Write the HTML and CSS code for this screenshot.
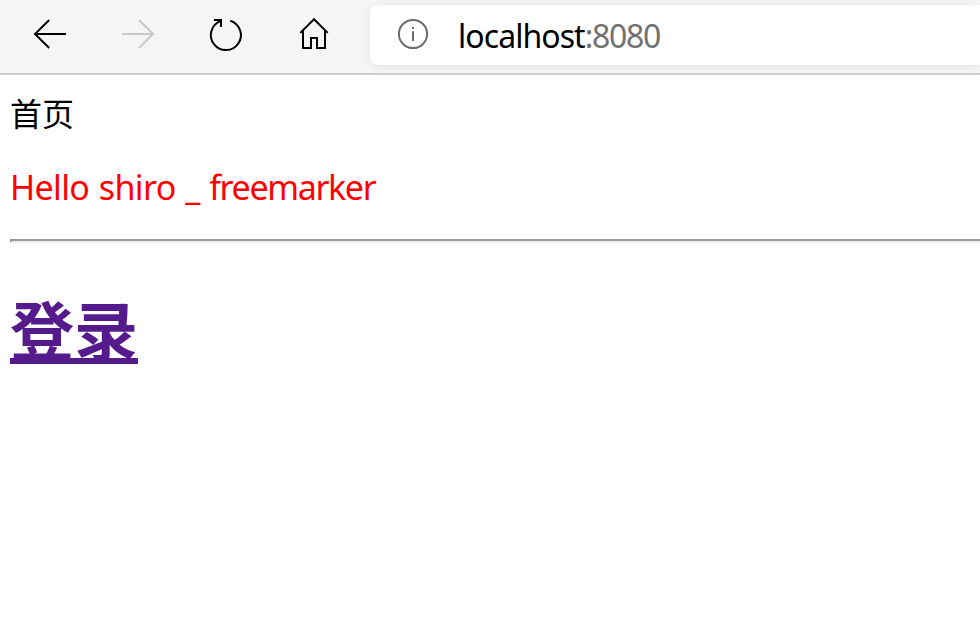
FILE: index.html
```html
<!DOCTYPE html>
<html lang="zh-CN">
<head>
<meta charset="utf-8">
<title>首页</title>
<link rel="stylesheet" href="styles.css">
</head>
<body>
<header class="toolbar">
  <nav class="buttons">
    <svg class="icon" viewBox="0 0 40 40"><path d="M36 20H5M19.2 6L5 20l14.2 14"/></svg>
    <svg class="icon disabled" viewBox="0 0 40 40"><path d="M4 20h31M21 6l14 14-14 14"/></svg>
    <svg class="icon" viewBox="0 0 40 40"><path d="M24.2 6.7A15 15 0 1 1 14.4 7.1L15 6.8"/><path d="M8 6h7v7"/></svg>
    <svg class="icon" viewBox="0 0 40 40"><path d="M6.3 18.9L20 5.2l13.7 13.7"/><path d="M9 17v17h8V24h6v10h8V17"/></svg>
  </nav>
  <div class="address">
    <svg class="info" viewBox="0 0 32 32"><circle cx="16" cy="16" r="14.1"/><path d="M16 13.2V23M16 9v2"/></svg>
    <span class="url">localhost<span class="port">:8080</span></span>
  </div>
</header>
<main class="page">
  <p class="title">首页</p>
  <p class="greeting">Hello shiro _ <span class="engine">freemarker</span></p>
  <hr class="rule">
  <h1 class="login"><a href="#">登录</a></h1>
</main>
</body>
</html>
```
FILE: styles.css
```css
* {
  box-sizing: border-box;
}

body {
  margin: 0;
  height: 618px;
  overflow: hidden;
  background: #fff;
  color: #000;
  font-family: "Noto Sans", "Noto Sans CJK SC", sans-serif;
}

.toolbar {
  display: flex;
  height: 75px;
  padding-top: 5px;
  background: #f5f5f5;
  border-bottom: 2px solid #cfcfcf;
  overflow: hidden;
}

.buttons {
  display: flex;
  gap: 48px;
  width: 370px;
  padding: 9px 0 0 30px;
}

.icon {
  flex: none;
  width: 40px;
  height: 40px;
  fill: none;
  stroke: #000;
  stroke-width: 2;
}

.disabled {
  stroke: #c8c8cb;
}

.address {
  display: flex;
  flex: 1;
  align-items: center;
  height: 60px;
  padding-left: 27px;
  background: #fff;
  border-radius: 8px 0 0 8px;
  box-shadow: 0 1px 10px rgba(0, 0, 0, 0.08);
}

.info {
  width: 32px;
  height: 32px;
  margin: -2px 29px 0 0;
  fill: none;
  stroke: #6b6b70;
  stroke-width: 2;
}

.url {
  padding-top: 1px;
  font-size: 32px;
  line-height: 60px;
  letter-spacing: -0.95px;
  white-space: nowrap;
}

.port {
  color: #717171;
  letter-spacing: -1.3px;
}

.page {
  padding: 18px 0 0 10px;
}

.title {
  margin: 0;
  font-size: 32px;
  line-height: 42px;
}

.greeting {
  margin: 31px 0 0;
  color: #f00;
  font-size: 34px;
  line-height: 42px;
  letter-spacing: -0.65px;
  word-spacing: 1.4px;
  white-space: nowrap;
}

.engine {
  letter-spacing: -1.35px;
}

.rule {
  height: 4px;
  margin: 31px 0 0;
  border: 2px solid;
  border-color: #9a9a9a #eee #eee #9a9a9a;
  border-right: 0;
}

.login {
  margin: 46px 0 0;
  font-size: 64px;
  line-height: 84px;
  font-weight: 700;
}

.login a {
  color: #551a8b;
  text-decoration-thickness: 6px;
  text-underline-offset: 3px;
  text-decoration-skip-ink: none;
}
```
